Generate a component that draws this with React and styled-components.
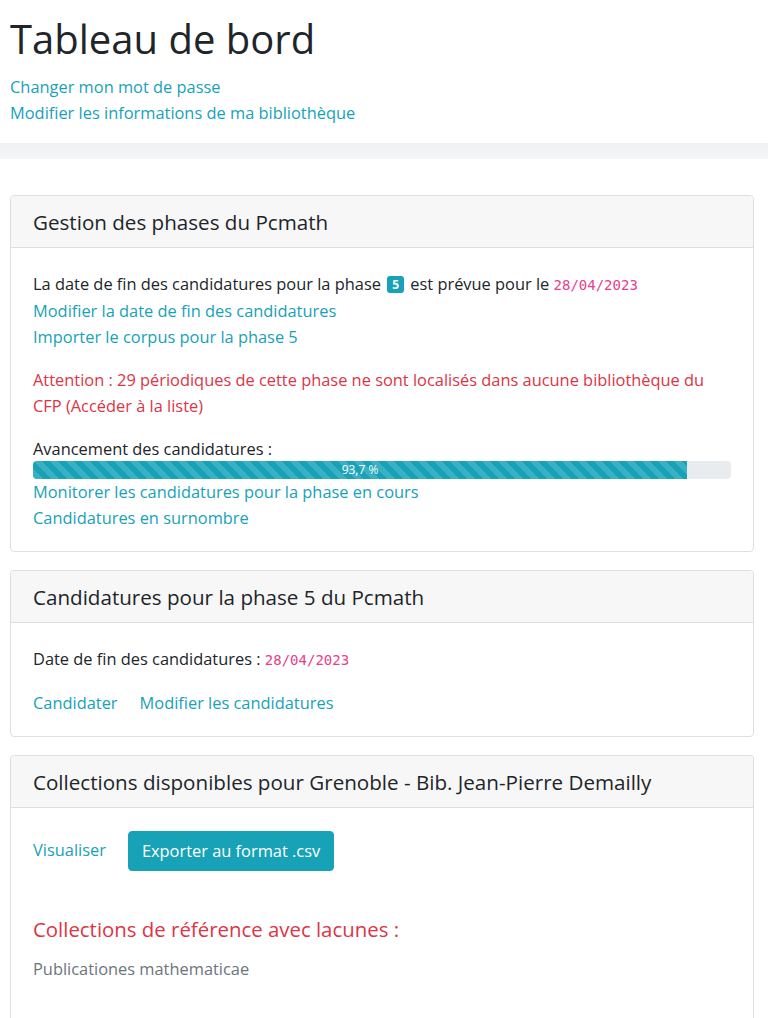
import React from "react";
import styled, { createGlobalStyle, css } from "styled-components";

const GlobalStyle = createGlobalStyle`
  html, body {
    margin: 0;
    padding: 0;
    background: #fff;
  }
  body {
    font-family: "Open Sans", "Noto Sans", "Liberation Sans", sans-serif;
    font-size: 16.4px;
    line-height: 26px;
    color: #212529;
  }
`;

const teal = "#17a2b8";

const Header = styled.header`
  padding: 13px 10px 17px;
`;

const Title = styled.h1`
  margin: 0 0 9px;
  font-size: 40px;
  font-weight: 400;
  line-height: 52px;
  color: #212529;
`;

const Link = styled.a`
  display: ${({ inline }) => (inline ? "inline" : "block")};
  color: ${teal};
  text-decoration: none;
  cursor: pointer;
`;

const Band = styled.div`
  height: 16px;
  background: linear-gradient(#f0f1f2, #f5f6f7);
`;

const Main = styled.main`
  display: flex;
  flex-direction: column;
  gap: 18px;
  padding: 36px 14px 0 10px;
`;

const Card = styled.section`
  border: 1px solid #dfdfdf;
  border-radius: 4px;
  background: #fff;
  ${({ open }) =>
    open &&
    css`
      border-bottom: none;
      border-bottom-left-radius: 0;
      border-bottom-right-radius: 0;
    `}
`;

const CardHeader = styled.div`
  padding: 13px 22px 12px;
  background: #f7f7f7;
  border-bottom: 1px solid #dfdfdf;
  font-size: 20.6px;
  line-height: 26px;
  color: #212529;
  border-radius: 4px 4px 0 0;
`;

const CardBody = styled.div`
  padding: 23px 22px 20px;
`;

const Line = styled.p`
  margin: 0;
`;

const Badge = styled.span`
  display: inline-block;
  padding: 0 5px;
  margin: 0 2px;
  background: ${teal};
  color: #fff;
  font-size: 12px;
  font-weight: 700;
  line-height: 17px;
  border-radius: 3px;
  vertical-align: 1px;
`;

const Code = styled.code`
  font-family: "DejaVu Sans Mono", "Liberation Mono", monospace;
  font-size: 14px;
  color: #e83e8c;
`;

const Danger = styled.p`
  margin: 17px 0 17px;
  color: #dc3545;
`;

const Progress = styled.div`
  display: flex;
  height: 18px;
  margin-top: -1px;
  background: #e9ecef;
  border-radius: 4px;
  overflow: hidden;
`;

const ProgressBar = styled.div`
  display: flex;
  align-items: center;
  justify-content: center;
  background-color: ${teal};
  background-image: linear-gradient(
    45deg,
    rgba(255, 255, 255, 0.15) 25%,
    transparent 25%,
    transparent 50%,
    rgba(255, 255, 255, 0.15) 50%,
    rgba(255, 255, 255, 0.15) 75%,
    transparent 75%,
    transparent
  );
  background-size: 16px 16px;
  color: #fff;
  font-size: 12px;
  line-height: 18px;
`;

const Actions = styled.div`
  display: flex;
  align-items: ${({ align }) => align || "baseline"};
  gap: 22px;
  margin-top: ${({ mt }) => mt || 0}px;
`;

const Button = styled.button`
  height: 40px;
  padding: 0 13px;
  border: 1px solid ${teal};
  border-radius: 4px;
  background: ${teal};
  color: #fff;
  font-family: inherit;
  font-size: 16.4px;
  line-height: 26px;
  cursor: pointer;
`;

const SideLink = styled(Link)`
  margin-top: -2px;
`;

const SubTitle = styled.h4`
  margin: 43px 0 12px;
  font-size: 20.4px;
  font-weight: 400;
  line-height: 30px;
  color: #dc3545;
`;

const Muted = styled.p`
  margin: 0 0 60px;
  color: #6c757d;
`;

const progress = 93.7;

export default function App() {
  return (
    <>
      <GlobalStyle />
      <Header>
        <Title>Tableau de bord</Title>
        <Link>Changer mon mot de passe</Link>
        <Link>Modifier les informations de ma bibliothèque</Link>
      </Header>
      <Band />
      <Main>
        <Card>
          <CardHeader>Gestion des phases du Pcmath</CardHeader>
          <CardBody>
            <Line>
              La date de fin des candidatures pour la phase <Badge>5</Badge> est
              prévue pour le <Code>28/04/2023</Code>
            </Line>
            <Link>Modifier la date de fin des candidatures</Link>
            <Link>Importer le corpus pour la phase 5</Link>
            <Danger>
              Attention : 29 périodiques de cette phase ne sont localisés dans
              aucune bibliothèque du CFP (Accéder à la liste)
            </Danger>
            <Line>Avancement des candidatures :</Line>
            <Progress>
              <ProgressBar style={{ width: `${progress}%` }}>93,7 %</ProgressBar>
            </Progress>
            <Link>Monitorer les candidatures pour la phase en cours</Link>
            <Link>Candidatures en surnombre</Link>
          </CardBody>
        </Card>

        <Card>
          <CardHeader>Candidatures pour la phase 5 du Pcmath</CardHeader>
          <CardBody>
            <Line>
              Date de fin des candidatures : <Code>28/04/2023</Code>
            </Line>
            <Actions mt={17}>
              <Link inline>Candidater</Link>
              <Link inline>Modifier les candidatures</Link>
            </Actions>
          </CardBody>
        </Card>

        <Card open>
          <CardHeader>
            Collections disponibles pour Grenoble - Bib. Jean-Pierre Demailly
          </CardHeader>
          <CardBody>
            <Actions align="center">
              <SideLink inline>Visualiser</SideLink>
              <Button>Exporter au format .csv</Button>
            </Actions>
            <SubTitle>Collections de référence avec lacunes :</SubTitle>
            <Muted>Publicationes mathematicae</Muted>
          </CardBody>
        </Card>
      </Main>
    </>
  );
}
